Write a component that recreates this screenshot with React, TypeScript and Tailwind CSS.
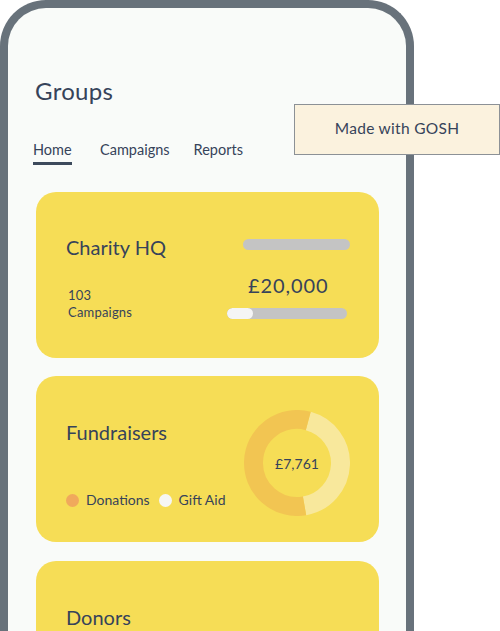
import React from "react";

const TEXT = "text-[#36435a]";

function arc(cx: number, cy: number, r: number, a0: number, a1: number) {
  const rad = (a: number) => ((a - 90) * Math.PI) / 180;
  const x0 = cx + r * Math.cos(rad(a0));
  const y0 = cy + r * Math.sin(rad(a0));
  const x1 = cx + r * Math.cos(rad(a1));
  const y1 = cy + r * Math.sin(rad(a1));
  const large = a1 - a0 > 180 ? 1 : 0;
  return `M ${x0} ${y0} A ${r} ${r} 0 ${large} 1 ${x1} ${y1}`;
}

function Donut() {
  return (
    <div className="relative w-[106px] h-[106px]">
      <svg width="106" height="106" viewBox="0 0 106 106">
        <path d={arc(53, 53, 43.5, 15, 170)} stroke="#f8e89c" strokeWidth="19" fill="none" />
        <path d={arc(53, 53, 43.5, 170, 375)} stroke="#f2c552" strokeWidth="19" fill="none" />
      </svg>
      <div className={`absolute inset-0 flex items-center justify-center text-[14px] ${TEXT}`}>£7,761</div>
    </div>
  );
}

export default function App() {
  return (
    <div
      className="relative w-[500px] h-[631px] overflow-hidden bg-white"
      style={{ fontFamily: "Lato, 'Open Sans', sans-serif" }}
    >
      <div className="w-[414px] h-[700px] border-[8px] border-b-0 border-[#68727b] rounded-t-[46px] bg-[#f9fbf9]">
        <div className="pt-[67px] pl-[27px]">
          <h1 className={`text-[24px] leading-[32px] tracking-[0.3px] ${TEXT}`}>Groups</h1>
          <div className={`mt-[33px] -ml-[2px] flex text-[14.5px] ${TEXT}`}>
            <div className="flex flex-col">
              <span className="leading-[20px]">Home</span>
              <span className="mt-[2px] h-[3px] w-[39px] bg-[#3d4a5c]" />
            </div>
            <span className="ml-[28px] leading-[20px]">Campaigns</span>
            <span className="ml-[24px] leading-[20px]">Reports</span>
          </div>
        </div>
        <div className="pl-[28px] mt-[27px] flex flex-col">
          {/* Card 1 */}
          <div className="w-[343px] h-[166px] rounded-[20px] bg-[#f6dd56] flex pl-[30px] pt-[41px]">
            <div className="w-[161px] flex flex-col">
              <div className={`text-[20px] leading-[28px] ${TEXT}`}>Charity HQ</div>
              <div className={`mt-[26px] pl-[2px] text-[13px] leading-[17px] tracking-[0.2px] ${TEXT}`}>103</div>
              <div className={`pl-[2px] text-[13px] leading-[17px] tracking-[0.2px] ${TEXT}`}>Campaigns</div>
            </div>
            <div className="flex flex-col pt-[6px]">
              <div className="ml-[16px] w-[107px] h-[11px] rounded-full bg-[#c4c4c4]" />
              <div className={`ml-[21px] mt-[21px] text-[20px] leading-[28px] tracking-[0.9px] ${TEXT}`}>£20,000</div>
              <div className="mt-[9px] w-[120px] h-[11px] rounded-full bg-[#c4c4c4] overflow-hidden">
                <div className="w-[26px] h-[11px] rounded-full bg-[#f5f5f5]" />
              </div>
            </div>
          </div>
          {/* Card 2 */}
          <div className="mt-[18px] w-[343px] h-[166px] rounded-[20px] bg-[#f6dd56] flex pl-[30px] pt-[42px]">
            <div className="w-[178px] flex flex-col">
              <div className={`text-[20px] leading-[28px] ${TEXT}`}>Fundraisers</div>
              <div className={`mt-[44px] flex items-center text-[14px] leading-[20px] ${TEXT}`}>
                <span className="w-[13px] h-[13px] rounded-full bg-[#f0a95c]" />
                <span className="ml-[7px]">Donations</span>
                <span className="ml-[9px] w-[13px] h-[13px] rounded-full bg-[#f6f6f4]" />
                <span className="ml-[7px]">Gift Aid</span>
              </div>
            </div>
            <div className="-mt-[8px]">
              <Donut />
            </div>
          </div>
          {/* Card 3 */}
          <div className="mt-[19px] w-[343px] h-[166px] rounded-[20px] bg-[#f6dd56] pl-[30px] pt-[42px]">
            <div className={`text-[20px] leading-[28px] ${TEXT}`}>Donors</div>
          </div>
        </div>
      </div>
      <div className={`absolute left-[294px] top-[104px] w-[206px] h-[51px] bg-[#fbf2de] border border-[#8c9196] flex items-center justify-center pb-[1px] text-[15.5px] tracking-[0.3px] ${TEXT}`}>
        Made with GOSH
      </div>
    </div>
  );
}
